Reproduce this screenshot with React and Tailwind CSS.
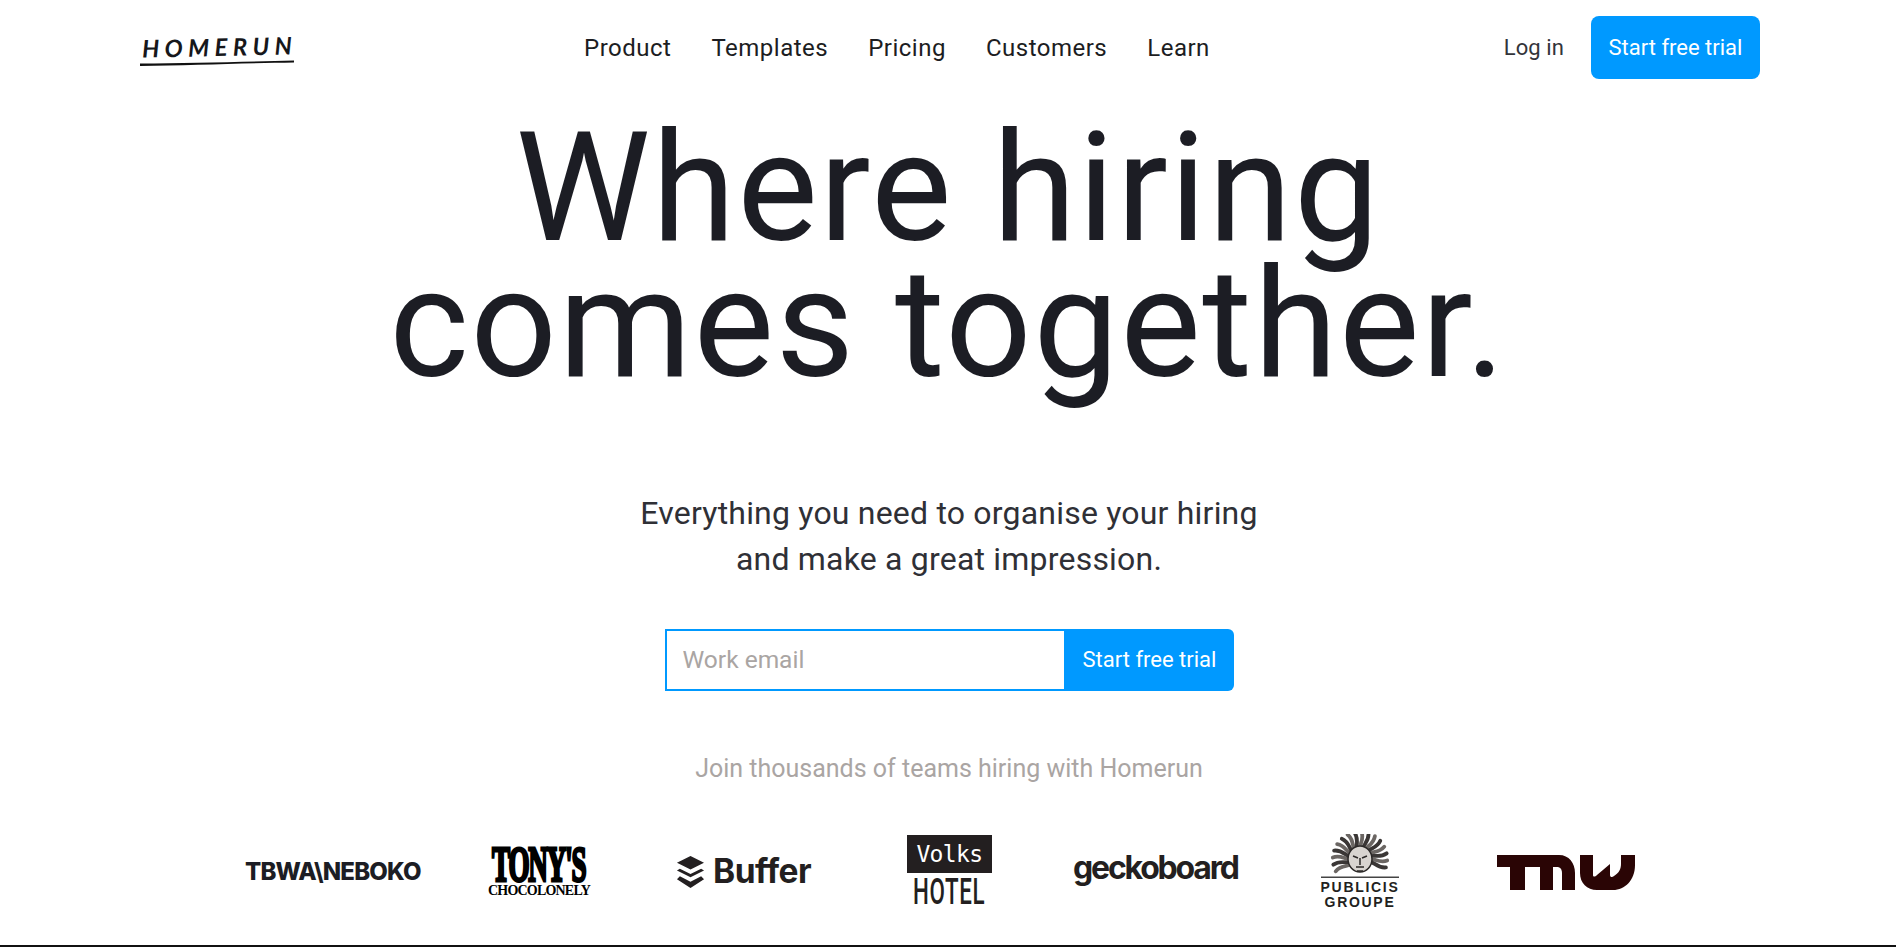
const Logo = () => (
  <div className="w-[156px] h-[36px] relative shrink-0 top-[3px]">
    <span className="absolute left-[2px] top-[-1px] text-[24px] leading-[30px] italic font-bold tracking-[5.4px] text-[#16171b] -rotate-[1.2deg] whitespace-nowrap [font-family:Lato,sans-serif]">HOMERUN</span>
    <svg className="absolute left-0 top-[26px]" width="156" height="8" viewBox="0 0 156 8">
      <path d="M0 4.5 C50 4 110 2.5 154 1.5 L154 3.5 C110 4 50 6.5 0 7Z" fill="#111" />
    </svg>
  </div>
);

const NavLink = ({ children }) => (
  <a className="text-[24px] tracking-[0.5px] text-[#1c1d22]">{children}</a>
);

const Buffer = () => (
  <div className="flex items-center gap-[8px] w-[136px]">
    <svg width="29" height="35" viewBox="0 0 30 34" fill="#231f20" className="shrink-0">
      <path d="M15 0 L29 7 L15 14 L1 7Z" />
      <path d="M4 13 L15 18.5 L26 13 L29 15 L15 22 L1 15Z" />
      <path d="M4 21 L15 26.5 L26 21 L29 24 L15 33 L1 24Z" />
    </svg>
    <span className="text-[33.5px] font-bold leading-none text-[#231f20] tracking-[-0.5px] [font-family:Inter,sans-serif]">Buffer</span>
  </div>
);

const Tonys = () => (
  <div className="flex flex-col items-center w-[100px] text-black whitespace-nowrap [font-family:'Liberation_Serif',serif] font-bold">
    <span className="text-[40px] leading-[34px] h-[34px] tracking-[-1.8px] [-webkit-text-stroke:2.5px_#000] scale-x-[0.68] scale-y-[1.25]">TONY'S</span>
    <span className="text-[14px] leading-[12px] h-[12px] mt-[3px] tracking-[-0.8px]">CHOCOLONELY</span>
  </div>
);

const Volks = () => (
  <div className="flex flex-col items-center w-[85px]">
    <div className="w-[85px] h-[38px] bg-[#231f20] text-white flex items-center justify-center text-[23px] tracking-[-0.6px] leading-none [font-family:'DejaVu_Sans_Mono',monospace]">Volks</div>
    <span className="text-[36px] leading-[34px] mt-[2px] text-[#231f20] font-medium scale-x-[0.62] tracking-[1px] [font-family:Roboto,sans-serif]">HOTEL</span>
  </div>
);

// the lion head in the publicis mark, rough rays around a face
const rays = [-115, -100, -85, -70, -55, -40, -25, -10, 5, 20, 35, 50, 65, 80, 95, 110];

const Publicis = () => (
  <div className="flex flex-col items-center w-[78px]">
    <svg width="78" height="44" viewBox="0 0 78 44">
      {rays.map((a, i) => (
        <path key={a} d="M39 20 C35 14 42 9 38 1" fill="none" stroke={i % 2 ? '#3a3635' : '#6b6663'} strokeWidth="3.4" strokeLinecap="round" transform={`rotate(${a} 39 25) scale(1.12) translate(-4 -3)`} />
      ))}
      <ellipse cx="39" cy="25" rx="12" ry="13" fill="#d8d4d0" stroke="#2b2827" strokeWidth="1.5" />
      <path d="M32 22l5 2M46 22l-5 2M39 24v7M35 33h8M36 37h6" stroke="#2b2827" strokeWidth="1.5" fill="none" />
      <rect x="0" y="42.5" width="78" height="1.5" fill="#444" />
    </svg>
    <span className="mt-[2px] text-[14px] leading-[15px] font-semibold tracking-[1.7px] text-[#231f20] [font-family:'Liberation_Sans',sans-serif]">PUBLICIS</span>
    <span className="text-[14px] leading-[15px] font-semibold tracking-[1.7px] text-[#231f20] [font-family:'Liberation_Sans',sans-serif]">GROUPE</span>
  </div>
);

const Tnw = () => (
  <svg width="138" height="35" viewBox="0 0 138 35" fill="#2a0505" className="shrink-0">
    <path d="M0 0 H62 C72 0 78 8 78 18 V35 H65 V18 C65 14 63 12 60 12 H56 V35 H43 V12 H28 V35 H13 V12 H0Z" />
    <path d="M83 0 H96 V20 C96 22 98 22 100 20 L113 9 V20 C113 22 115 23 117 21 C122 18 124 14 124 9 V0 H138 V10 C138 25 128 35 116 35 H100 C90 35 83 28 83 18Z" />
  </svg>
);

export default function App() {
  return (
    <div className="h-[947px] overflow-hidden bg-white flex flex-col border-b-2 border-[#111] [font-family:Roboto,sans-serif]">
      <header className="h-[95px] shrink-0 w-[1620px] ml-[140px] flex items-center">
        <Logo />
        <nav className="flex items-center gap-[40px] ml-[288px]">
          <NavLink>Product</NavLink>
          <NavLink>Templates</NavLink>
          <NavLink>Pricing</NavLink>
          <NavLink>Customers</NavLink>
          <NavLink>Learn</NavLink>
        </nav>
        <a className="ml-auto text-[22px] tracking-[0.1px] text-[#33343a] mr-[27px]">Log in</a>
        <a className="w-[169px] h-[63px] rounded-[8px] bg-[#0099ff] text-white text-[22px] font-[450] flex items-center justify-center">Start free trial</a>
      </header>

      <main className="flex flex-col items-center">
        <h1 className="text-[152px] leading-[136px] tracking-[1.6px] text-[#1c1d24] text-center mt-[25px]">
          Where hiring<br />comes together.
        </h1>
        <p className="mt-[98px] ml-[2px] text-[32px] tracking-[0.2px] leading-[46px] text-[#2f3036] text-center">
          Everything you need to organise your hiring<br />and make a great impression.
        </p>
        <form className="flex mt-[47px] w-[569px] h-[62px] ml-[2px]">
          <input placeholder="Work email" className="w-[401px] h-full border-2 border-[#0099ff] pl-[16px] pr-[16px] pb-[2px] text-[24.5px] outline-none placeholder:text-[#aaa5a3]" />
          <button type="button" className="flex-1 bg-[#0099ff] text-white text-[22px] font-[450] rounded-r-[6px] pb-[2px]">Start free trial</button>
        </form>
        <p className="mt-[64px] ml-[2px] text-[25px] leading-[28px] text-[#aaa5a3]">Join thousands of teams hiring with Homerun</p>
        <div className="self-start ml-[245px] h-[90px] mt-[44px] flex items-center">
          <span className="w-[176px] shrink-0 text-[24px] font-extrabold tracking-[-0.8px] text-[#1c1d24] whitespace-nowrap [font-family:Inter,sans-serif]">TBWA\NEBOKO</span>
          <div className="ml-[68px]"><Tonys /></div>
          <div className="ml-[87px]"><Buffer /></div>
          <div className="ml-[95px]"><Volks /></div>
          <span className="ml-[81px] mb-[8px] w-[163px] shrink-0 text-[32px] font-bold tracking-[-2.2px] text-[#231f20] leading-none [font-family:Inter,sans-serif]">geckoboard</span>
          <div className="ml-[85px]"><Publicis /></div>
          <div className="ml-[98px]"><Tnw /></div>
        </div>
      </main>
    </div>
  );
}
